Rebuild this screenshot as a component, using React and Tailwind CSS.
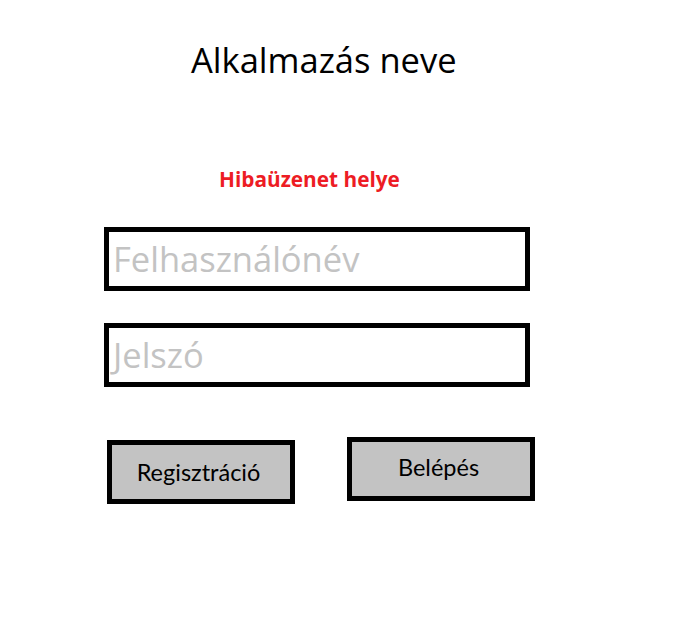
import React from "react";

export default function App() {
  return (
    <div className="w-[686px] h-[622px] bg-white text-black overflow-hidden" style={{ fontFamily: '"Open Sans", "Noto Sans", sans-serif' }}>
      <div className="pl-[191px] pt-[42px] text-[34.5px] leading-[36px] whitespace-nowrap">Alkalmazás neve</div>
      <div className="pl-[219px] mt-[91px] text-[20.8px] leading-[20px] font-bold text-[#ed1c24] whitespace-nowrap">
        Hibaüzenet helye
      </div>
      <div className="ml-[104px] mt-[38px] w-[426px] h-[64px] border-[5px] border-black flex items-center pl-[4px] text-[34.5px] leading-[54px] text-[#c3c3c3] whitespace-nowrap">
        Felhasználónév
      </div>
      <div className="ml-[104px] mt-[32px] w-[426px] h-[64px] border-[5px] border-black flex items-center pl-[4px] text-[34.5px] leading-[54px] text-[#c3c3c3] whitespace-nowrap">
        Jelszó
      </div>
      <div className="flex items-start pl-[107px] mt-[50px] gap-[52px]" style={{ fontFamily: 'Lato, "Open Sans", sans-serif' }}>
        <div className="mt-[3px] w-[188px] h-[64px] border-[5px] border-black bg-[#c3c3c3] flex items-center justify-center text-[23.5px] leading-[24px] pr-[5px]">
          Regisztráció
        </div>
        <div className="w-[188px] h-[64px] border-[5px] border-black bg-[#c3c3c3] flex items-center justify-center text-[23.5px] leading-[24px] pr-[5px] pb-[4px]">
          Belépés
        </div>
      </div>
    </div>
  );
}
